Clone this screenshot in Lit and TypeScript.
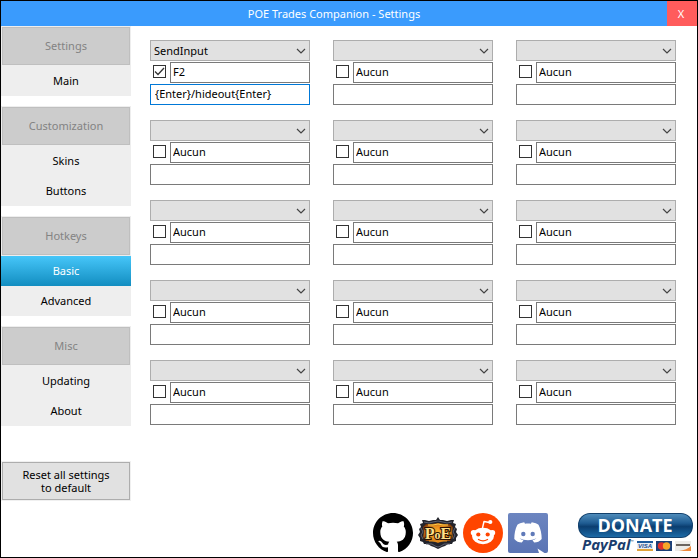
import { LitElement, html, css, svg } from "lit";
import { customElement, property, state } from "lit/decorators.js";
import { classMap } from "lit/directives/class-map.js";

interface Section {
  title: string;
  pages: string[];
}

const SECTIONS: Section[] = [
  { title: "Settings", pages: ["Main"] },
  { title: "Customization", pages: ["Skins", "Buttons"] },
  { title: "Hotkeys", pages: ["Basic", "Advanced"] },
  { title: "Misc", pages: ["Updating", "About"] },
];

interface Hotkey {
  mode: string;
  enabled: boolean;
  key: string;
  action: string;
}

const HOTKEYS: Hotkey[] = Array.from({ length: 15 }, (_, i) =>
  i === 0
    ? { mode: "SendInput", enabled: true, key: "F2", action: "{Enter}/hideout{Enter}" }
    : { mode: "", enabled: false, key: "Aucun", action: "" }
);

const githubIcon = svg`<svg class="icon" viewBox="0 0 16 16" aria-hidden="true">
  <path fill="#000" d="M8 0C3.58 0 0 3.58 0 8c0 3.54 2.29 6.53 5.47 7.59.4.07.55-.17.55-.38 0-.19-.01-.82-.01-1.49-2.01.37-2.53-.49-2.69-.94-.09-.23-.48-.94-.82-1.13-.28-.15-.68-.52-.01-.53.63-.01 1.08.58 1.23.82.72 1.21 1.87.87 2.33.66.07-.52.28-.87.51-1.07-1.78-.2-3.64-.89-3.64-3.95 0-.87.31-1.59.82-2.15-.08-.2-.36-1.02.08-2.12 0 0 .67-.21 2.2.82.64-.18 1.32-.27 2-.27s1.36.09 2 .27c1.53-1.04 2.2-.82 2.2-.82.44 1.1.16 1.92.08 2.12.51.56.82 1.27.82 2.15 0 3.07-1.87 3.75-3.65 3.95.29.25.54.73.54 1.48 0 1.07-.01 1.93-.01 2.2 0 .21.15.46.55.38A8.01 8.01 0 0 0 16 8c0-4.42-3.58-8-8-8z"/>
</svg>`;

const poeIcon = svg`<svg class="icon" viewBox="0 0 40 40" aria-hidden="true">
  <defs>
    <radialGradient id="ember" cx="50%" cy="50%" r="60%">
      <stop offset="0" stop-color="#ffb52e"/>
      <stop offset="0.6" stop-color="#e58a1c"/>
      <stop offset="1" stop-color="#6a2c08"/>
    </radialGradient>
  </defs>
  <path fill="#23242c" d="M15 7l3 0 2-3 2 3 3 0 4 1 4-1 3 0-1 3 3 1-1 3 2 2-1 3 2 3-2 3 0 3-3 1-1 2-4 0-3 2-3 1-4 2-4-2-3-1-3-2-4 0-1-2-3-1 0-3-2-3 2-3-1-3 2-2-1-3 3-1-1-3 3 0 4 1z"/>
  <path fill="none" stroke="#5d6070" stroke-width="1" d="M6 9l5 1 4-1 5-1 5 1 4 1 5-1M3 15l2 4-2 3 2 4M37 15l-2 4 2 3-2 4M8 31l6 0 3 2 3 1 3-1 3-2 6 0"/>
  <path fill="url(#ember)" d="M8 11l6 0 6-1 6 1 6 0 3 3-1 5 1 5-3 4-6 0-3 1-3 1-3-1-3-1-6 0-3-4 1-5-1-5z"/>
  <path fill="none" stroke="#ffcf4a" stroke-width="1" d="M10 12l5 0 5-1 5 1 5 0"/>
  <path fill="none" stroke="#e8931f" stroke-width="1" d="M11 28l6 0 3 1 3-1 6 0"/>
  <text class="poe" x="20" y="26" text-anchor="middle">P<tspan class="poe-small">o</tspan>E</text>
</svg>`;

const redditIcon = svg`<svg class="icon" viewBox="0 0 40 40" aria-hidden="true">
  <circle cx="20" cy="20" r="20" fill="#ff4500"/>
  <path fill="none" stroke="#fff" stroke-width="1.4" stroke-linejoin="round" stroke-linecap="round" d="M19.500 15l1.500-6.500 5.500 1"/>
  <circle cx="27.300" cy="9" r="2.100" fill="#fff"/>
  <circle cx="10.600" cy="19.800" r="2.800" fill="#fff"/>
  <circle cx="29.400" cy="19.800" r="2.800" fill="#fff"/>
  <ellipse cx="20" cy="23" rx="11" ry="8.200" fill="#fff"/>
  <circle cx="15.300" cy="21.500" r="2.100" fill="#ff4500"/>
  <circle cx="24.700" cy="21.500" r="2.100" fill="#ff4500"/>
  <path fill="none" stroke="#ff4500" stroke-width="1.300" stroke-linecap="round" d="M15.500 26.500q4.500 2.600 9 0"/>
</svg>`;

const discordIcon = svg`<svg class="icon" viewBox="0 0 40 40" aria-hidden="true">
  <defs>
    <linearGradient id="blurple" x1="0" y1="0" x2="0" y2="1">
      <stop offset="0" stop-color="#6c85c0"/>
      <stop offset="1" stop-color="#5a74b4"/>
    </linearGradient>
  </defs>
  <rect width="40" height="40" rx="2" fill="url(#blurple)"/>
  <path fill="#fff" d="M29.500 35.500l7 4.500h-5.500z"/>
  <path fill="#fff" d="M16.200 9.300c-3 .3-5.600 1.500-6.800 2.500C7.200 15.800 6.300 21 6.300 26c2 2.500 4.500 3.500 7.500 3.600l1.700-2.300c-1.500-.4-2.800-1-4-2 5 2.600 12 2.600 17 0-1.200 1-2.500 1.600-4 2l1.700 2.300c3-.1 5.500-1.100 7.500-3.600 0-5-1-10.200-3.200-14.200-1.200-1-3.800-2.200-6.800-2.500l-.8 1.500c-1.900-.3-4-.3-5.900 0z"/>
  <ellipse cx="15.300" cy="21" rx="2.200" ry="2.300" fill="#607ab9"/>
  <ellipse cx="24.700" cy="21" rx="2.200" ry="2.300" fill="#607ab9"/>
</svg>`;

const donateBadge = svg`<svg class="badge" viewBox="0 0 115 40" aria-hidden="true">
  <defs>
    <linearGradient id="pill" x1="0" y1="0" x2="0" y2="1">
      <stop offset="0" stop-color="#4f8cbb"/>
      <stop offset="0.4" stop-color="#1f5c92"/>
      <stop offset="0.55" stop-color="#0b3e70"/>
      <stop offset="1" stop-color="#1c6aa6"/>
    </linearGradient>
  </defs>
  <rect x="0" y="0" width="115" height="25" rx="12" fill="#12406c"/>
  <rect x="1" y="1" width="113" height="23" rx="11" fill="url(#pill)"/>
  <text class="donate" x="57" y="19" text-anchor="middle">DONATE</text>
  <text class="paypal" x="4" y="37">PayPal<tspan class="mark" dy="-7">™</tspan></text>
  <rect x="59" y="28" width="16" height="10" fill="#e8eef4"/>
  <rect x="59" y="28" width="16" height="2" fill="#1d5b9c"/>
  <rect x="59" y="36" width="16" height="2" fill="#e0a33a"/>
  <text class="visa" x="67" y="35" text-anchor="middle">VISA</text>
  <rect x="78" y="28" width="16" height="10" fill="#1b3f77"/>
  <circle cx="83.500" cy="33" r="3.700" fill="#e0312c"/>
  <circle cx="88.500" cy="33" r="3.700" fill="#f6a72b"/>
  <rect x="97" y="28" width="16" height="10" fill="#ecebe8"/>
  <rect x="98" y="31" width="14" height="2" fill="#6b6560"/>
  <path fill="#f08a3c" d="M113 33v5h-12q8-1 12-5z"/>
</svg>`;

@customElement("hotkey-slot")
export class HotkeySlot extends LitElement {
  @property({ attribute: false }) hotkey!: Hotkey;
  @property({ type: Number }) index = 0;

  static styles = css`
    :host {
      display: flex;
      flex-direction: column;
      gap: 1px;
      min-width: 0;
    }
    .mode,
    .field {
      box-sizing: border-box;
      width: 100%;
      height: 21px;
      margin: 0;
      border: 1px solid #7a7a7a;
      border-radius: 0;
      background: #fff;
      color: #000;
      font: inherit;
      outline: none;
    }
    .mode {
      appearance: none;
      padding: 0 20px 0 3px;
      border-color: #adadad;
      background: #e1e1e1;
    }
    .picker {
      display: grid;
      align-items: center;
    }
    .picker > * {
      grid-area: 1 / 1;
    }
    .chevron {
      justify-self: end;
      width: 10px;
      height: 6px;
      margin-right: 4px;
      pointer-events: none;
    }
    .row {
      display: flex;
      align-items: center;
      gap: 4px;
      padding-left: 3px;
    }
    .check {
      display: grid;
      place-items: center;
      flex: none;
      padding-bottom: 2px;
    }
    .check > * {
      grid-area: 1 / 1;
    }
    .box {
      appearance: none;
      box-sizing: border-box;
      width: 13px;
      height: 13px;
      margin: 0;
      border: 1px solid #333;
      background: #fff;
    }
    .tick {
      width: 11px;
      height: 11px;
      visibility: hidden;
      pointer-events: none;
    }
    .box:checked + .tick {
      visibility: visible;
    }
    .field {
      padding: 0 2px 2px;
    }
    .action {
      padding: 0 4px 2px;
    }
    .active {
      border-color: #0078d7;
    }
  `;

  render() {
    const { mode, enabled, key, action } = this.hotkey;
    const n = this.index + 1;
    return html`
      <div class="picker">
        <select class="mode" aria-label="Hotkey ${n} mode">
          <option>${mode}</option>
        </select>
        <svg class="chevron" viewBox="0 0 10 6" aria-hidden="true">
          <path d="M1 1l4 4 4-4" fill="none" stroke="#444" stroke-width="1.2" />
        </svg>
      </div>
      <div class="row">
        <span class="check">
          <input class="box" type="checkbox" aria-label="Enable hotkey ${n}" .checked=${enabled} />
          <svg class="tick" viewBox="0 0 11 11" aria-hidden="true">
            <path d="M1 5.500l3 3 6-6.500" fill="none" stroke="#333" stroke-width="1.300" />
          </svg>
        </span>
        <input class="field" type="text" aria-label="Hotkey ${n} key" .value=${key} />
      </div>
      <input
        class=${classMap({ field: true, action: true, active: action !== "" })}
        type="text"
        aria-label="Hotkey ${n} action"
        .value=${action}
      />
    `;
  }
}

@customElement("app-root")
export class AppRoot extends LitElement {
  @state() private page = "Basic";

  static styles = css`
    :host {
      display: flex;
      flex-direction: column;
      box-sizing: border-box;
      min-height: 100vh;
      border: 1px solid #000;
      background: #fff;
      color: #000;
      font: 11px/13px "Noto Sans", "Open Sans", sans-serif;
    }
    button {
      margin: 0;
      padding: 0;
      border: 0;
      border-radius: 0;
      background: none;
      color: inherit;
      font: inherit;
      text-align: center;
    }
    .titlebar {
      display: flex;
      height: 25px;
      background: #3a9bfd;
      color: #fff;
    }
    .title {
      flex: 1;
      margin: 0;
      font: inherit;
      line-height: 25px;
      text-align: center;
    }
    .close {
      width: 30px;
      padding-right: 2px;
      background: #ff5c5c;
      color: #fff;
    }
    .body {
      display: flex;
      flex: 1;
    }
    .sidebar {
      display: flex;
      flex-direction: column;
      gap: 10px;
      flex: none;
      width: 130px;
    }
    .section {
      display: flex;
      flex-direction: column;
      background: #eee;
    }
    .heading {
      box-sizing: border-box;
      height: 38px;
      margin: 1px;
      border: 1px solid #bfbfbf;
      background: #ccc;
      color: #838383;
      font: inherit;
      line-height: 36px;
      text-align: center;
    }
    .page {
      height: 30px;
      padding-bottom: 2px;
    }
    .current {
      background: linear-gradient(#46c6f9, #128dc0);
      color: #fff;
    }
    .reset {
      height: 38px;
      margin: 26px 1px 0;
      border: 1px solid #adadad;
      background: #e1e1e1;
      padding: 0 16px;
      outline: 1px solid #f0f0f0;
    }
    .main {
      display: flex;
      flex-direction: column;
      justify-content: space-between;
      flex: 1;
      min-width: 0;
    }
    .grid {
      display: grid;
      grid-template-columns: repeat(3, minmax(0, 1fr));
      gap: 15px 23px;
      padding: 14px 21px 15px 19px;
    }
    .links {
      display: flex;
      align-items: flex-start;
      justify-content: flex-end;
      gap: 5px;
      padding: 0 4px 4px;
    }
    .link {
      display: block;
    }
    .support {
      margin-left: 25px;
    }
    .icon {
      display: block;
      width: 40px;
      height: 40px;
    }
    .badge {
      display: block;
      width: 115px;
      height: 40px;
      overflow: visible;
    }
    .poe {
      font: bold 16px "Liberation Serif", serif;
      fill: #ffe08a;
      stroke: #2a1002;
      stroke-width: 2px;
      paint-order: stroke;
    }
    .poe-small {
      font-size: 12px;
    }
    .donate {
      font: bold 18px "Open Sans", sans-serif;
      fill: #fff;
    }
    .paypal {
      font: italic bold 15px "Open Sans", sans-serif;
      fill: #1b3d6d;
    }
    .mark {
      font: 4px "Open Sans", sans-serif;
    }
    .visa {
      font: italic bold 6px "Liberation Sans", sans-serif;
      fill: #1d4b8c;
    }
  `;

  render() {
    return html`
      <header class="titlebar">
        <h1 class="title">POE Trades Companion - Settings</h1>
        <button class="close" aria-label="Close">X</button>
      </header>
      <div class="body">
        <nav class="sidebar">
          ${SECTIONS.map(
            (section) => html`
              <section class="section">
                <h2 class="heading">${section.title}</h2>
                ${section.pages.map(
                  (page) => html`
                    <button
                      class=${classMap({ page: true, current: page === this.page })}
                      @click=${() => (this.page = page)}
                    >
                      ${page}
                    </button>
                  `
                )}
              </section>
            `
          )}
          <button class="reset">Reset all settings to default</button>
        </nav>
        <main class="main">
          <div class="grid">
            ${HOTKEYS.map(
              (hotkey, i) => html`<hotkey-slot .hotkey=${hotkey} .index=${i}></hotkey-slot>`
            )}
          </div>
          <footer class="links">
            <a class="link" href="#github" aria-label="GitHub">${githubIcon}</a>
            <a class="link" href="#poe" aria-label="Path of Exile">${poeIcon}</a>
            <a class="link" href="#reddit" aria-label="Reddit">${redditIcon}</a>
            <a class="link" href="#discord" aria-label="Discord">${discordIcon}</a>
            <a class="link support" href="#donate" aria-label="Donate with PayPal">${donateBadge}</a>
          </footer>
        </main>
      </div>
    `;
  }
}
